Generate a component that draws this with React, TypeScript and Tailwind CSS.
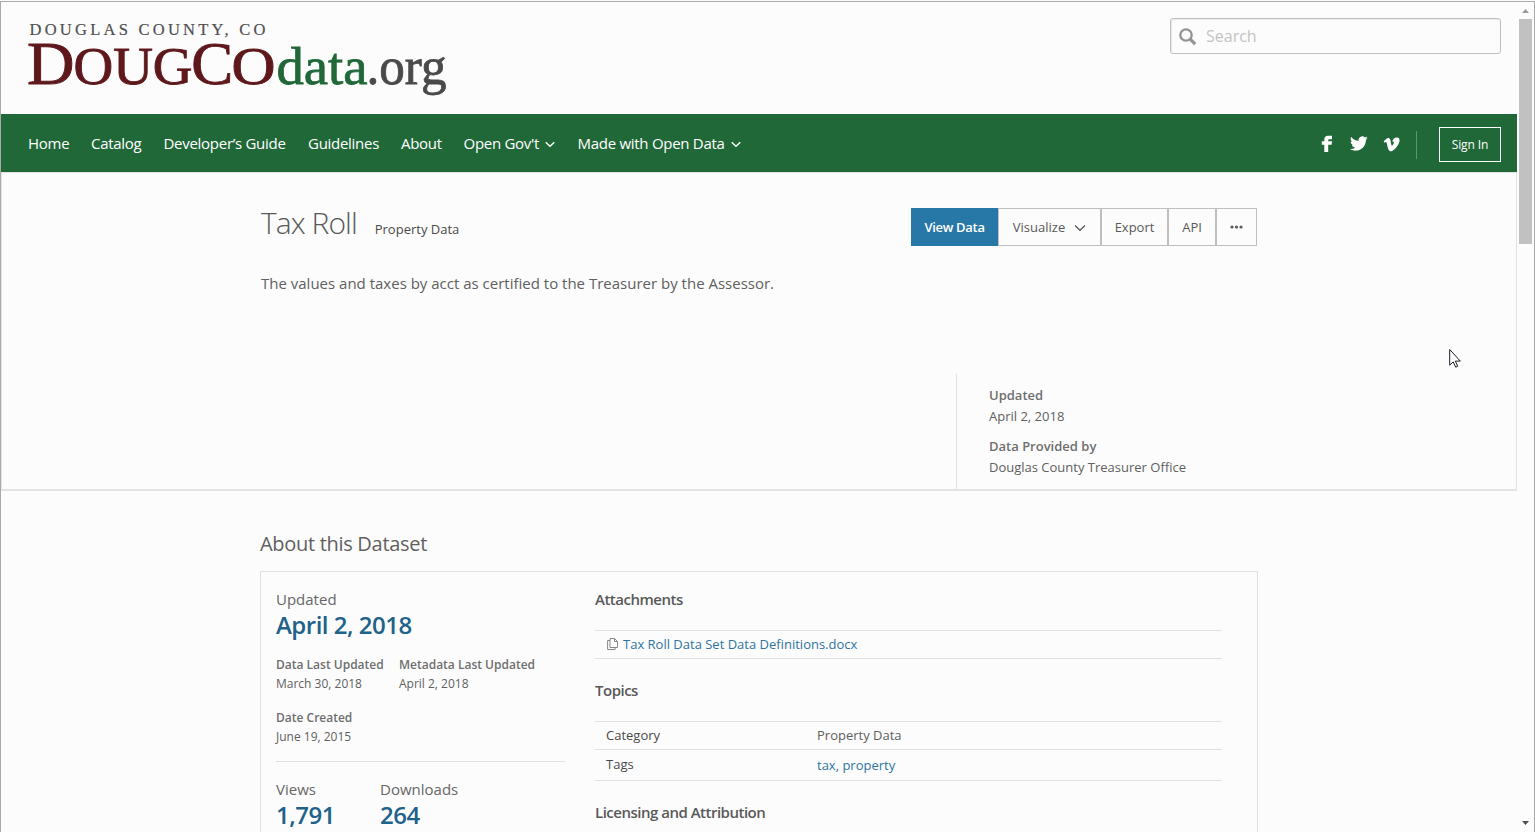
import React from "react";

const menu: { label: string; cls: string; drop?: boolean }[] = [
  { label: "Home", cls: "w-[63px]" },
  { label: "Catalog", cls: "w-[72.5px]" },
  { label: "Developer’s Guide", cls: "w-[144.5px]" },
  { label: "Guidelines", cls: "w-[93px]" },
  { label: "About", cls: "w-[62.5px]" },
  { label: "Open Gov't", cls: "w-[114px]", drop: true },
  { label: "Made with Open Data", cls: "w-[170px]", drop: true },
];

function Logo() {
  return (
    <svg width="425" height="86" viewBox="24 16 425 86" fontFamily="'Liberation Serif', serif">
      <text x="29.5" y="34.5" fontSize="16.500" textLength="236" fill="#505050" stroke="#505050" strokeWidth="0.2">DOUGLAS COUNTY, CO</text>
      <g fill="#5e181c" stroke="#5e181c" strokeWidth="0.9">
        <text x="27" y="84" fontSize="61.5" textLength="47.500" lengthAdjust="spacingAndGlyphs">D</text>
        <text x="73.5" y="84" fontSize="52" textLength="119" lengthAdjust="spacingAndGlyphs">OUG</text>
        <text x="191.200" y="84" fontSize="61.5" textLength="42" lengthAdjust="spacingAndGlyphs">C</text>
        <text x="231.400" y="84" fontSize="52" textLength="44" lengthAdjust="spacingAndGlyphs">O</text>
      </g>
      <text x="276.500" y="84" fontSize="53" textLength="91" lengthAdjust="spacingAndGlyphs" fill="#216839" stroke="#216839" strokeWidth="0.8">data</text>
      <text x="366.500" y="84" fontSize="53" textLength="80" lengthAdjust="spacingAndGlyphs" fill="#4a4a4a" stroke="#4a4a4a" strokeWidth="0.8">.org</text>
    </svg>
  );
}

function Chevron({ className }: { className?: string }) {
  return (
    <svg className={className} width="12" height="8" viewBox="0 0 12 8" fill="none" stroke="currentColor" strokeWidth="1.200">
      <path d="M1 1.500 6 6.300 11 1.500" />
    </svg>
  );
}

function NavChevron() {
  return (
    <svg className="ml-[6px] mt-[3px]" width="10" height="7" viewBox="0 0 10 7" fill="none" stroke="currentColor" strokeWidth="1.300">
      <path d="M.700 1.300 5 5.300 9.300 1.300" />
    </svg>
  );
}

function Header() {
  return (
    <header className="flex h-[112px] justify-between">
      <h1 className="ml-[23px] mt-[14px]"><Logo /></h1>
      <div className="mr-[16px] mt-[16px] flex h-[36px] w-[331px] items-center rounded-[3px] border border-[#bfbfbf] shadow-[inset_1px_1px_1px_#e8e8e8]">
        <svg className="ml-[7px] mt-px" width="20" height="20" viewBox="0 0 20 20" fill="none" stroke="#929292">
          <circle cx="8" cy="8" r="5.700" strokeWidth="2.300" />
          <path d="m12.200 12.200 5 5" strokeWidth="3.200" />
        </svg>
        <span className="ml-[8px] text-[16px] text-[#c3c3c3]">Search</span>
      </div>
    </header>
  );
}

function Nav() {
  return (
    <nav className="flex h-[58px] items-center justify-between bg-[#216839] pl-[27px] pr-[16px] text-white">
      <ul className="flex text-[15px] leading-[20px] tracking-[-0.28px]">
        {menu.map((m) => (
          <li key={m.label} className={`${m.cls} flex shrink-0 items-center whitespace-nowrap`}>
            {m.label}
            {m.drop && <NavChevron />}
          </li>
        ))}
      </ul>
      <div className="flex items-center">
        <svg className="mt-[2px]" width="12" height="18" viewBox="0 0 12 18" fill="white">
          <path d="M3.300 17V9.800H.8V6.300h2.500V4.200C3.300 2.100 4.700.8 6.900.8H11v3.400H8.500c-.9 0-1.300.4-1.300 1.100v1H11l-.4 3.500H7.200V17z" />
        </svg>
        <svg className="ml-[17px]" width="18" height="15" viewBox="1.200 3.300 21.600 18" preserveAspectRatio="none" fill="white">
          <path d="M22.5 5.700c-.8.400-1.600.6-2.500.7.900-.5 1.600-1.400 1.900-2.400-.8.500-1.800.9-2.800 1.100A4.400 4.400 0 0 0 11.600 9c-3.600-.2-6.900-1.900-9-4.600-1.200 2-.6 4.600 1.300 5.900-.7 0-1.400-.2-2-.5 0 2.100 1.500 3.900 3.500 4.300-.6.200-1.300.2-2 .1.600 1.700 2.200 3 4.100 3A8.900 8.900 0 0 1 1.200 19c8.500 5 18.900-.3 19.100-11 .9-.6 1.600-1.400 2.200-2.300z" />
        </svg>
        <svg className="mt-[3px] ml-[15px]" width="18" height="15" viewBox="0 0 18 15" fill="white">
          <path d="M.7 4.200C2.100 2.800 3.900 1 5.200.9c1.600-.1 2.100 1.100 2.500 3.500.4 2.500.8 4.300 1.300 4.300s1.900-2.200 1.900-3.200c0-1-.7-1.100-1.700-.7C9.900 2 11.600.5 14 .6c2 .1 2.800 1.400 2.500 3.500-.5 3.900-5.200 9.500-8 10.200-2.800.4-3.600-3.300-4.200-5.900C3.800 6.200 3.500 4.700 2.700 4.900l-1.200.8z" />
        </svg>
        <span className="ml-[15px] mt-[3px] h-[28px] w-px bg-[#5f946f]" />
        <button className="ml-[22px] mt-[2px] h-[35px] w-[62px] border border-white pt-px text-[12px] tracking-[-0.1px]">Sign In</button>
      </div>
    </nav>
  );
}

function Actions() {
  const base = "flex items-center justify-center border border-[#bfbfbf]";
  return (
    <div className="flex h-[38px] text-[13px] text-[#595959]">
      <button className="w-[87px] bg-[#2878a7] pt-px font-semibold tracking-[-0.3px] text-white">View Data</button>
      <button className={`${base} w-[103px] pt-px`}>Visualize<Chevron className="ml-[9px]" /></button>
      <button className={`${base} w-[67px] pt-px`}>Export</button>
      <button className={`${base} w-[48px] pt-px`}>API</button>
      <button className={`${base} w-[41px]`}>
        <svg width="13" height="4" viewBox="0 0 13 4" fill="#595959"><circle cx="2" cy="2" r="1.600" /><circle cx="6.500" cy="2" r="1.600" /><circle cx="11" cy="2" r="1.600" /></svg>
      </button>
    </div>
  );
}

function Hero() {
  return (
    <section className="h-[319px] border border-b-2 border-[#e3e3e3] pl-[259px] pt-[35px]">
      <div className="flex w-[996px] justify-between">
        <h2 className="leading-[29px] text-[#595959]">
          <span className="text-[30px] font-light tracking-[-0.95px]">Tax Roll</span>
          <span className="ml-[18px] text-[13px] text-[#4a4a4a]">Property Data</span>
        </h2>
        <Actions />
      </div>
      <p className="mt-[27px] text-[15px] leading-[20px] text-[#606060]">The values and taxes by acct as certified to the Treasurer by the Assessor.</p>
      <dl className="ml-[695px] mt-[81px] h-[115px] border-l border-[#e0e0e0] pl-[32px] pt-[11px] text-[13px] leading-[21px] text-[#606060]">
        <dt className="font-semibold text-[#6e6e6e]">Updated</dt>
        <dd>April 2, 2018</dd>
        <dt className="mt-[9px] font-semibold text-[#6e6e6e]">Data Provided by</dt>
        <dd>Douglas County Treasurer Office</dd>
      </dl>
    </section>
  );
}

function Small({ label, value, className }: { label: string; value: string; className?: string }) {
  return (
    <div className={className}>
      <div className="font-semibold text-[#6e6e6e]">{label}</div>
      <div>{value}</div>
    </div>
  );
}

function Big({ label, value, className }: { label: string; value: string; className?: string }) {
  return (
    <div className={className}>
      <div className="text-[15px] leading-[20px] text-[#666]">{label}</div>
      <div className="text-[24px] font-semibold leading-[32px] tracking-[-0.5px] text-[#20628a]">{value}</div>
    </div>
  );
}

function About() {
  const h = "text-[15px] font-semibold leading-[20px] tracking-[-0.5px] text-[#595959]";
  return (
    <section className="ml-[259px] mt-[39px] w-[998px]">
      <h2 className="text-[20px] leading-[28px] tracking-[-0.3px] text-[#606060]">About this Dataset</h2>
      <div className="mt-[13px] flex h-[300px] border border-[#e0e0e0] pl-[15px] pt-[17px]">
        <div className="w-[289px] text-[12px] leading-[19px] text-[#606060]">
          <Big label="Updated" value="April 2, 2018" />
          <div className="mt-[14px] flex">
            <Small className="w-[123px]" label="Data Last Updated" value="March 30, 2018" />
            <Small label="Metadata Last Updated" value="April 2, 2018" />
          </div>
          <Small className="mt-[15px]" label="Date Created" value="June 19, 2015" />
          <hr className="mt-[15px] border-[#e0e0e0]" />
          <div className="mt-[17px] flex">
            <Big className="w-[104px]" label="Views" value="1,791" />
            <Big label="Downloads" value="264" />
          </div>
        </div>
        <div className="ml-[30px] w-[627px] text-[13px] text-[#606060]">
          <h3 className={h}>Attachments</h3>
          <div className="mt-[21px] flex items-center border-y border-[#e0e0e0] pl-[12px] leading-[27px]">
            <svg className="-mt-px" width="11" height="12" viewBox="0 0 11 12" fill="none" stroke="#888">
              <path d="M3 .5h4.500l3 3V9.500H3zM7.500.5v3h3M3 2.500H.6v9h7.500V9.500" />
            </svg>
            <a className="ml-[5px] text-[#2f74a0]">Tax Roll Data Set Data Definitions.docx</a>
          </div>
          <h3 className={`${h} mt-[21px]`}>Topics</h3>
          <div className="mt-[21px] flex border-y border-[#e0e0e0] pl-[11px] leading-[27px]">
            <span className="w-[211px] text-[#4a4a4a]">Category</span>
            <span>Property Data</span>
          </div>
          <div className="flex h-[31px] border-b border-[#e0e0e0] pl-[11px]">
            <span className="w-[211px] leading-[28px] text-[#4a4a4a]">Tags</span>
            <span className="leading-[30px] text-[#2f74a0]">tax, property</span>
          </div>
          <h3 className={`${h} mt-[21px] tracking-[-0.5px]`}>Licensing and Attribution</h3>
        </div>
      </div>
    </section>
  );
}

function ScrollBar() {
  return (
    <div className="flex h-full w-[17px] shrink-0 flex-col items-center">
      <svg className="mt-[7px]" width="7" height="4" viewBox="0 0 7 4" fill="#9a9a9a"><path d="M0 4 3.500 0 7 4z" /></svg>
      <div className="mt-[6px] h-[225px] w-[13px] bg-[#c1c1c1]" />
      <svg className="mb-[7px] mt-auto" width="7" height="4" viewBox="0 0 7 4" fill="#505050"><path d="M0 0h7L3.500 4z" /></svg>
    </div>
  );
}

export default function App() {
  return (
    <div className="relative h-[832px] w-[1535px] overflow-hidden bg-[#fcfcfc] pt-px font-['Open_Sans','Noto_Sans',sans-serif]">
      <div className="flex h-[831px] border-x border-t border-[#aaa]">
        <main className="w-[1516px] shrink-0">
          <Header />
          <Nav />
          <Hero />
          <About />
        </main>
        <ScrollBar />
      </div>
      <svg className="absolute left-[1449px] top-[348px]" width="13" height="21" viewBox="0 0 13 21" fill="white" stroke="#1a1a24" strokeWidth="1">
        <path d="M.7 1.500v15.700l3.500-3.300 2.500 5.300 2-1-2.400-5.100h5z" />
      </svg>
    </div>
  );
}
